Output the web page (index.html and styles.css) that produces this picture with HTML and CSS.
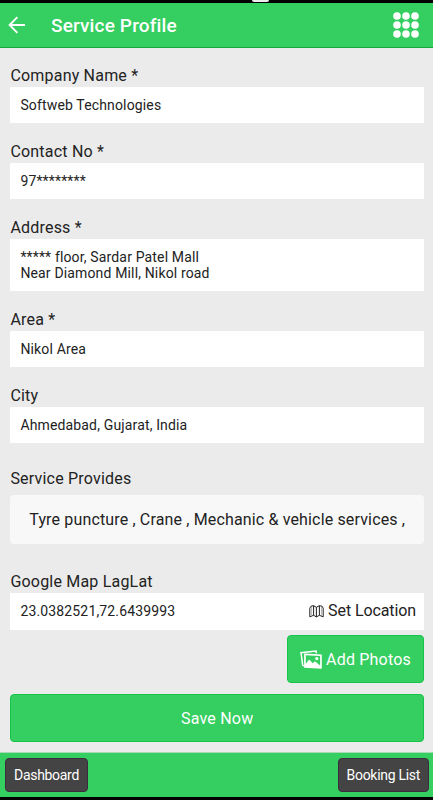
FILE: index.html
```html
<!DOCTYPE html>
<html lang="en">
<head>
  <meta charset="UTF-8">
  <meta name="viewport" content="width=device-width, initial-scale=1.0">
  <title>Service Profile</title>
  <link rel="stylesheet" href="styles.css">
</head>
<body>
  <div class="status-bar"><span class="notch"></span></div>

  <header class="header">
    <svg class="back-icon" viewBox="0 0 18 18">
      <path d="M17 9H2M9.4 1.2L1.6 9l7.8 7.8" fill="none" stroke="#fff" stroke-width="1.9"/>
    </svg>
    <h1>Service Profile</h1>
    <svg class="grid-icon" viewBox="0 0 26 26" fill="#fff">
      <circle cx="4" cy="4" r="3.8"/><circle cx="13" cy="4" r="3.8"/><circle cx="22" cy="4" r="3.8"/>
      <circle cx="4" cy="13" r="3.8"/><circle cx="13" cy="13" r="3.8"/><circle cx="22" cy="13" r="3.8"/>
      <circle cx="4" cy="22" r="3.8"/><circle cx="13" cy="22" r="3.8"/><circle cx="22" cy="22" r="3.8"/>
    </svg>
  </header>

  <main class="container">
    <div class="group">
      <div class="label">Company Name *</div>
      <div class="field">Softweb Technologies</div>
    </div>
    <div class="group">
      <div class="label">Contact No *</div>
      <div class="field">97********</div>
    </div>
    <div class="group">
      <div class="label">Address *</div>
      <div class="field">***** floor, Sardar Patel Mall<br>Near Diamond Mill, Nikol road</div>
    </div>
    <div class="group">
      <div class="label">Area *</div>
      <div class="field">Nikol Area</div>
    </div>
    <div class="group">
      <div class="label">City</div>
      <div class="field">Ahmedabad, Gujarat, India</div>
    </div>
    <div class="group services">
      <div class="label">Service Provides</div>
      <div class="service-box">Tyre puncture , Crane , Mechanic &amp; vehicle services ,</div>
    </div>
    <div class="group map">
      <div class="label">Google Map LagLat</div>
      <div class="field">
        <span>23.0382521,72.6439993</span>
        <span class="set-location">
          <svg class="map-icon" viewBox="0 0 15 13" fill="none" stroke="#222" stroke-width="1">
            <path d="M.8 3.2L2 1.2l2.6-.5 2.8 1.6L10.4.7l2.6.5 1.2 2v8.6l-3.8-1.5-3 1.6-2.8-1.6L.8 11.8zM4.6.7v9.6M7.4 2.3v9.6M10.4.7v9.6"/>
            <path d="M2.6 2v8.6M12.5 2v8.6" stroke="#888" stroke-width=".6"/>
          </svg>
          Set Location
        </span>
      </div>
    </div>

    <button class="btn photos-btn">
      <svg class="photos-icon" viewBox="0 0 22 19">
        <path d="M4.2 15.7L2.7 15.4 1 2.7 16 1l.4 2.4" fill="none" stroke="#fff" stroke-width="1.5"/>
        <path fill="#fff" fill-rule="evenodd" d="M4.1 3.4l17.7 1.1v14.3l-17.7-1.1zM5.8 5.2v8.5l3.4-4.1 3.5 3.7 2.3-2 5.1 4.2V6.1z"/>
        <circle cx="16.8" cy="8.6" r="1.6" fill="#fff"/>
      </svg>
      Add Photos
    </button>
    <button class="btn save-btn">Save Now</button>
  </main>

  <footer class="footer">
    <button class="nav-btn">Dashboard</button>
    <button class="nav-btn">Booking List</button>
  </footer>
</body>
</html>
```
FILE: styles.css
```css
* {
  box-sizing: border-box;
}

body {
  display: flex;
  flex-direction: column;
  height: 100vh;
  margin: 0;
  font-family: Roboto, sans-serif;
  background-color: #ebebeb;
  color: #222;
  overflow: hidden;
}

button {
  font-family: inherit;
  border: none;
}

.status-bar {
  height: 3px;
  background: #000;
}

.notch {
  display: block;
  width: 17px;
  height: 2px;
  margin-left: 252px;
  background: #eee;
  border-radius: 0 0 3px 3px;
}

.header {
  display: flex;
  align-items: center;
  height: 45px;
  padding: 0 14px 0 8px;
  background-color: #35ce60;
  border-bottom: 1px solid #19a83c;
}

.header h1 {
  flex: 1;
  margin: 0 0 0 25px;
  font-size: 19px;
  font-weight: 500;
  letter-spacing: 0.15px;
  color: #fff;
}

.back-icon {
  width: 18px;
  height: 18px;
}

.grid-icon {
  width: 26px;
  height: 26px;
}

.container {
  display: flex;
  flex-direction: column;
  flex: 1;
  padding: 18px 9px 0 10.4px;
}

.group {
  margin-bottom: 18.4px;
}

.label {
  height: 21px;
  font-size: 16px;
  line-height: 20px;
  letter-spacing: 0.2px;
}

.field {
  padding: 10.2px 10px;
  font-size: 14px;
  line-height: 16.1px;
  letter-spacing: 0.15px;
  background: #fff;
}

.services {
  margin: 8px 0 28px;
}

.services .label {
  height: 26px;
}

.service-box {
  height: 49px;
  font-size: 16px;
  line-height: 49px;
  text-align: center;
  letter-spacing: 0.15px;
  background: #f8f8f8;
  border-radius: 4px;
}

.map {
  margin-bottom: 5px;
}

.map .field {
  display: flex;
  justify-content: space-between;
  align-items: center;
  height: 37px;
  padding: 0 8px 1px 10px;
}

.set-location {
  display: flex;
  align-items: center;
  gap: 4px;
  font-size: 16px;
  letter-spacing: -0.1px;
}

.map-icon {
  width: 15px;
  height: 13px;
}

.btn {
  height: 48px;
  padding: 0;
  font-size: 16px;
  letter-spacing: 0.2px;
  color: #fff;
  background-color: #35ce60;
  border: 1px solid #16c449;
  border-radius: 4px;
}

.photos-btn {
  display: flex;
  align-items: center;
  justify-content: center;
  gap: 4px;
  align-self: flex-end;
  width: 137px;
  margin-bottom: 11px;
}

.photos-icon {
  width: 22px;
  height: 19px;
}

.footer {
  display: flex;
  justify-content: space-between;
  align-items: center;
  height: 48px;
  padding: 0 4px 0 5px;
  background-color: #35ce60;
  border-top: 1px solid #a9d9b5;
  border-bottom: 3px solid #000;
}

.nav-btn {
  height: 34px;
  padding: 0 8px;
  font-size: 14px;
  letter-spacing: -0.3px;
  color: #fff;
  background-color: #444;
  border: 1px solid #3d2b40;
  border-radius: 4px;
}
```
